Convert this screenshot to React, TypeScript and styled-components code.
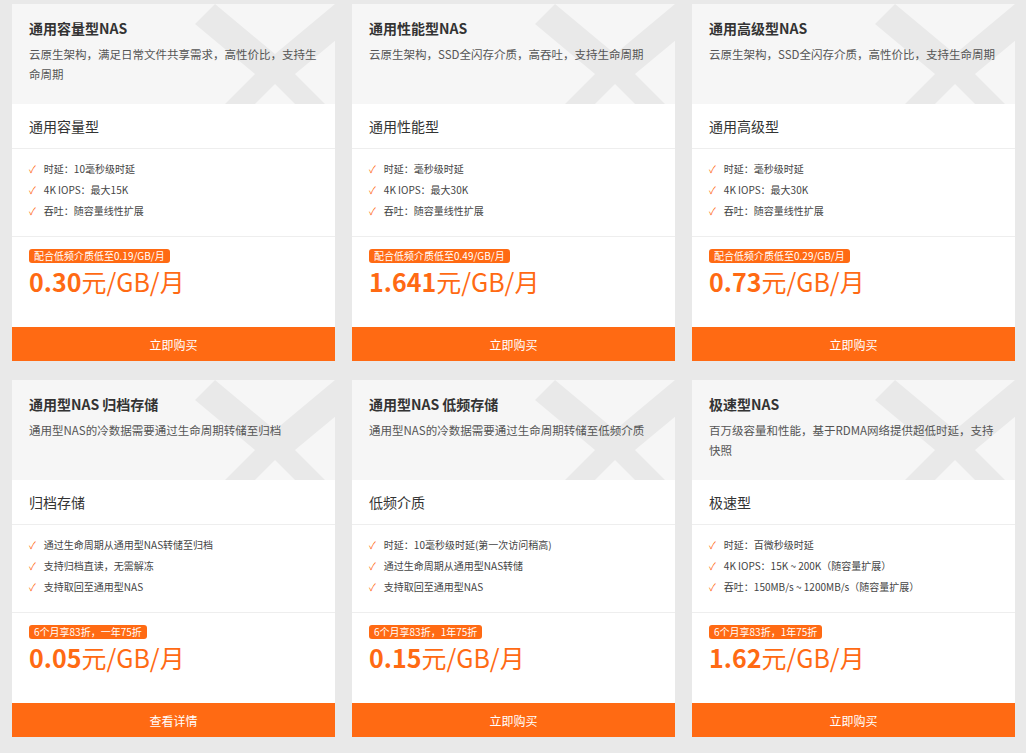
import styled, { createGlobalStyle } from 'styled-components'

const Global = createGlobalStyle`
  body {
    margin: 0;
    background: #e9e9e9;
    font-family: "Noto Sans CJK SC", "Liberation Sans", sans-serif;
  }
`

const Grid = styled.div`
  display: grid;
  grid-template-columns: repeat(3, 323px);
  column-gap: 17px;
  row-gap: 19px;
  padding: 4px 0 0 12px;
`

const Card = styled.div`
  background: #fff;
  display: flex;
  flex-direction: column;
`

const Head = styled.div`
  position: relative;
  overflow: hidden;
  height: 100px;
  padding: 14px 17px 0;
  box-sizing: border-box;
  background: #f6f6f6;
`

const Mark = styled.svg`
  position: absolute;
  right: -20px;
  top: -10px;
`

const Title = styled.div`
  position: relative;
  font-size: 14px;
  font-weight: 700;
  color: #333;
  line-height: 20px;
`

const Desc = styled.div`
  position: relative;
  margin-top: 6px;
  font-size: 11.5px;
  color: #555;
  line-height: 20px;
`

const Sub = styled.div`
  height: 44px;
  padding: 0 17px;
  display: flex;
  align-items: center;
  font-size: 14px;
  color: #333;
  border-bottom: 1px solid #eee;
`

const Features = styled.ul`
  list-style: none;
  margin: 0;
  padding: 12px 17px;
  height: 88px;
  box-sizing: border-box;
  border-bottom: 1px solid #eee;
  display: flex;
  flex-direction: column;
  gap: 5px;
`

const Item = styled.li`
  font-size: 10px;
  color: #444;
  line-height: 16px;
  display: flex;
  gap: 8px;
  &::before {
    content: '✓';
    color: #ff6a13;
  }
`

const PriceBox = styled.div`
  height: 90px;
  padding: 12px 17px 0;
  box-sizing: border-box;
  display: flex;
  flex-direction: column;
  align-items: flex-start;
  gap: 2px;
`

const Badge = styled.span`
  background: #ff6a13;
  color: #fff;
  font-size: 10px;
  line-height: 14px;
  padding: 0 5px;
  border-radius: 3px;
`

const Price = styled.div`
  color: #ff6a13;
  font-size: 25px;
  line-height: 32px;
  b { font-weight: 700; }
`

const Button = styled.div`
  height: 34px;
  background: #ff6a13;
  color: #fff;
  font-size: 12px;
  display: flex;
  align-items: center;
  justify-content: center;
`

const cards = [
  { t: '通用容量型NAS', d: '云原生架构，满足日常文件共享需求，高性价比，支持生命周期', s: '通用容量型', f: ['时延：10毫秒级时延', '4K IOPS：最大15K', '吞吐：随容量线性扩展'], b: '配合低频介质低至0.19/GB/月', p: '0.30', btn: '立即购买' },
  { t: '通用性能型NAS', d: '云原生架构，SSD全闪存介质，高吞吐，支持生命周期', s: '通用性能型', f: ['时延：毫秒级时延', '4K IOPS：最大30K', '吞吐：随容量线性扩展'], b: '配合低频介质低至0.49/GB/月', p: '1.641', btn: '立即购买' },
  { t: '通用高级型NAS', d: '云原生架构，SSD全闪存介质，高性价比，支持生命周期', s: '通用高级型', f: ['时延：毫秒级时延', '4K IOPS：最大30K', '吞吐：随容量线性扩展'], b: '配合低频介质低至0.29/GB/月', p: '0.73', btn: '立即购买' },
  { t: '通用型NAS 归档存储', d: '通用型NAS的冷数据需要通过生命周期转储至归档', s: '归档存储', f: ['通过生命周期从通用型NAS转储至归档', '支持归档直读，无需解冻', '支持取回至通用型NAS'], b: '6个月享83折，一年75折', p: '0.05', btn: '查看详情' },
  { t: '通用型NAS 低频存储', d: '通用型NAS的冷数据需要通过生命周期转储至低频介质', s: '低频介质', f: ['时延：10毫秒级时延(第一次访问稍高)', '通过生命周期从通用型NAS转储', '支持取回至通用型NAS'], b: '6个月享83折，1年75折', p: '0.15', btn: '立即购买' },
  { t: '极速型NAS', d: '百万级容量和性能，基于RDMA网络提供超低时延，支持快照', s: '极速型', f: ['时延：百微秒级时延', '4K IOPS：15K ~ 200K（随容量扩展）', '吞吐：150MB/s ~ 1200MB/s（随容量扩展）'], b: '6个月享83折，1年75折', p: '1.62', btn: '立即购买' },
]

export default function App() {
  return (
    <>
      <Global />
      <Grid>
        {cards.map((c) => (
          <Card key={c.t}>
            <Head>
              <Mark width="160" height="130" viewBox="0 0 160 130">
                <path d="M20 10 L80 60 L140 10 L160 30 L100 80 L150 130 L120 130 L80 90 L40 130 L10 130 L60 80 L0 30 Z" fill="#e9e9e9" />
              </Mark>
              <Title>{c.t}</Title>
              <Desc>{c.d}</Desc>
            </Head>
            <Sub>{c.s}</Sub>
            <Features>
              {c.f.map((x) => <Item key={x}>{x}</Item>)}
            </Features>
            <PriceBox>
              <Badge>{c.b}</Badge>
              <Price><b>{c.p}</b>元/GB/月</Price>
            </PriceBox>
            <Button>{c.btn}</Button>
          </Card>
        ))}
      </Grid>
    </>
  )
}
